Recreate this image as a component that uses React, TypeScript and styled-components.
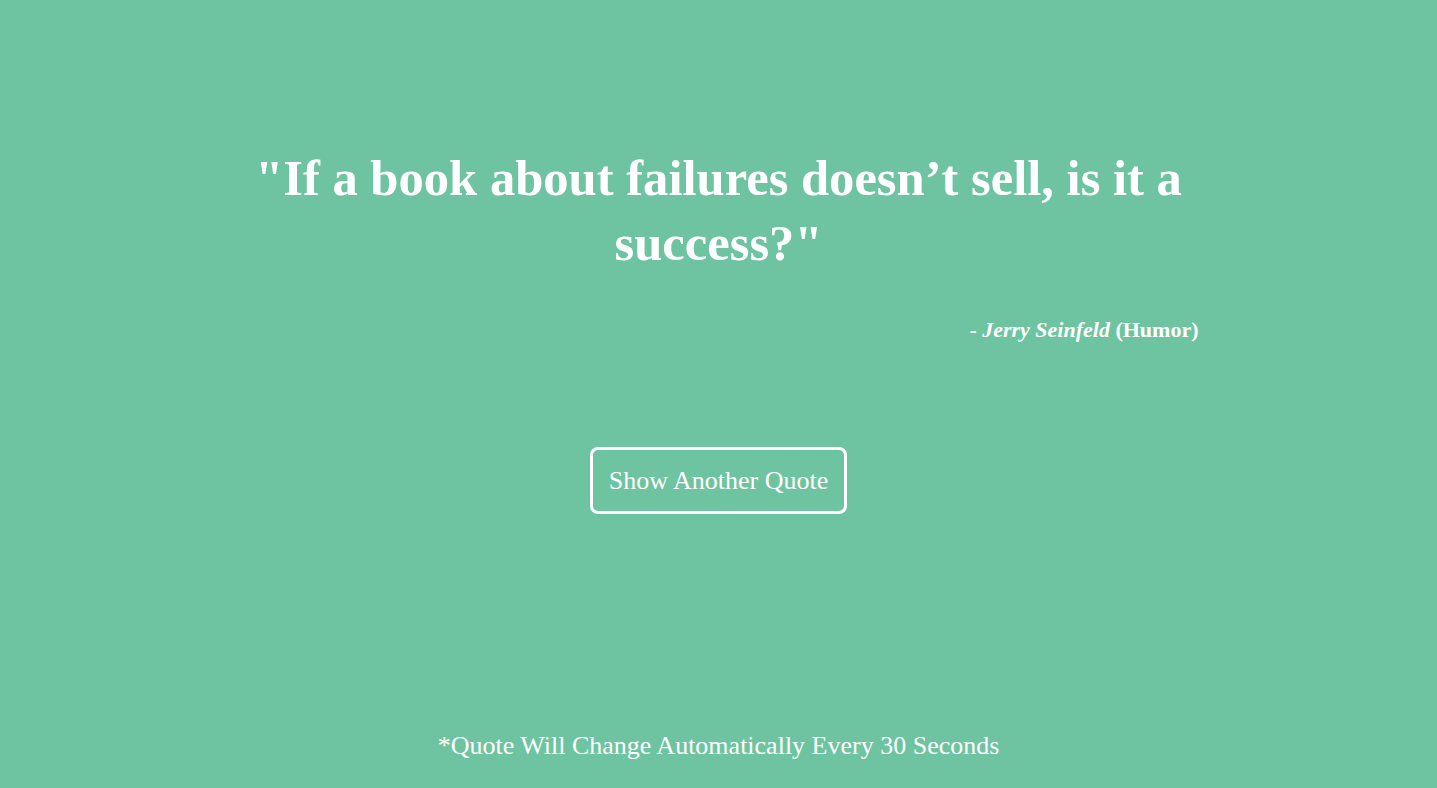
import styled, { createGlobalStyle } from "styled-components";

const GlobalStyle = createGlobalStyle`
  html, body {
    margin: 0;
    padding: 0;
    background: #6ec4a0;
  }
  body {
    font-family: "Liberation Serif", "DejaVu Serif", serif;
    color: #fff;
  }
`;

const Page = styled.div`
  height: 788px;
  display: flex;
  flex-direction: column;
  align-items: center;
  background: #6ec4a0;
`;

const QuoteBox = styled.div`
  width: 960px;
  margin-top: 146px;
  display: flex;
  flex-direction: column;
`;

const QuoteText = styled.h1`
  margin: 0;
  font-size: 50.6px;
  line-height: 65px;
  font-weight: 700;
  text-align: center;
`;

const Author = styled.p`
  margin: 41px 0 0;
  font-size: 22px;
  font-weight: 700;
  text-align: right;
  em {
    font-style: italic;
  }
`;

const Button = styled.button`
  margin-top: 104px;
  padding: 0 16px;
  height: 67px;
  background: transparent;
  border: 3px solid #fff;
  border-radius: 8px;
  color: #fff;
  font-family: inherit;
  font-size: 26px;
  cursor: pointer;
`;

const Footer = styled.p`
  margin: auto 0 27px;
  font-size: 26px;
  text-align: center;
`;

export default function App() {
  return (
    <>
      <GlobalStyle />
      <Page>
        <QuoteBox>
          <QuoteText>"If a book about failures doesn’t sell, is it a success?"</QuoteText>
          <Author>
            - <em>Jerry Seinfeld</em> (Humor)
          </Author>
        </QuoteBox>
        <Button>Show Another Quote</Button>
        <Footer>*Quote Will Change Automatically Every 30 Seconds</Footer>
      </Page>
    </>
  );
}
